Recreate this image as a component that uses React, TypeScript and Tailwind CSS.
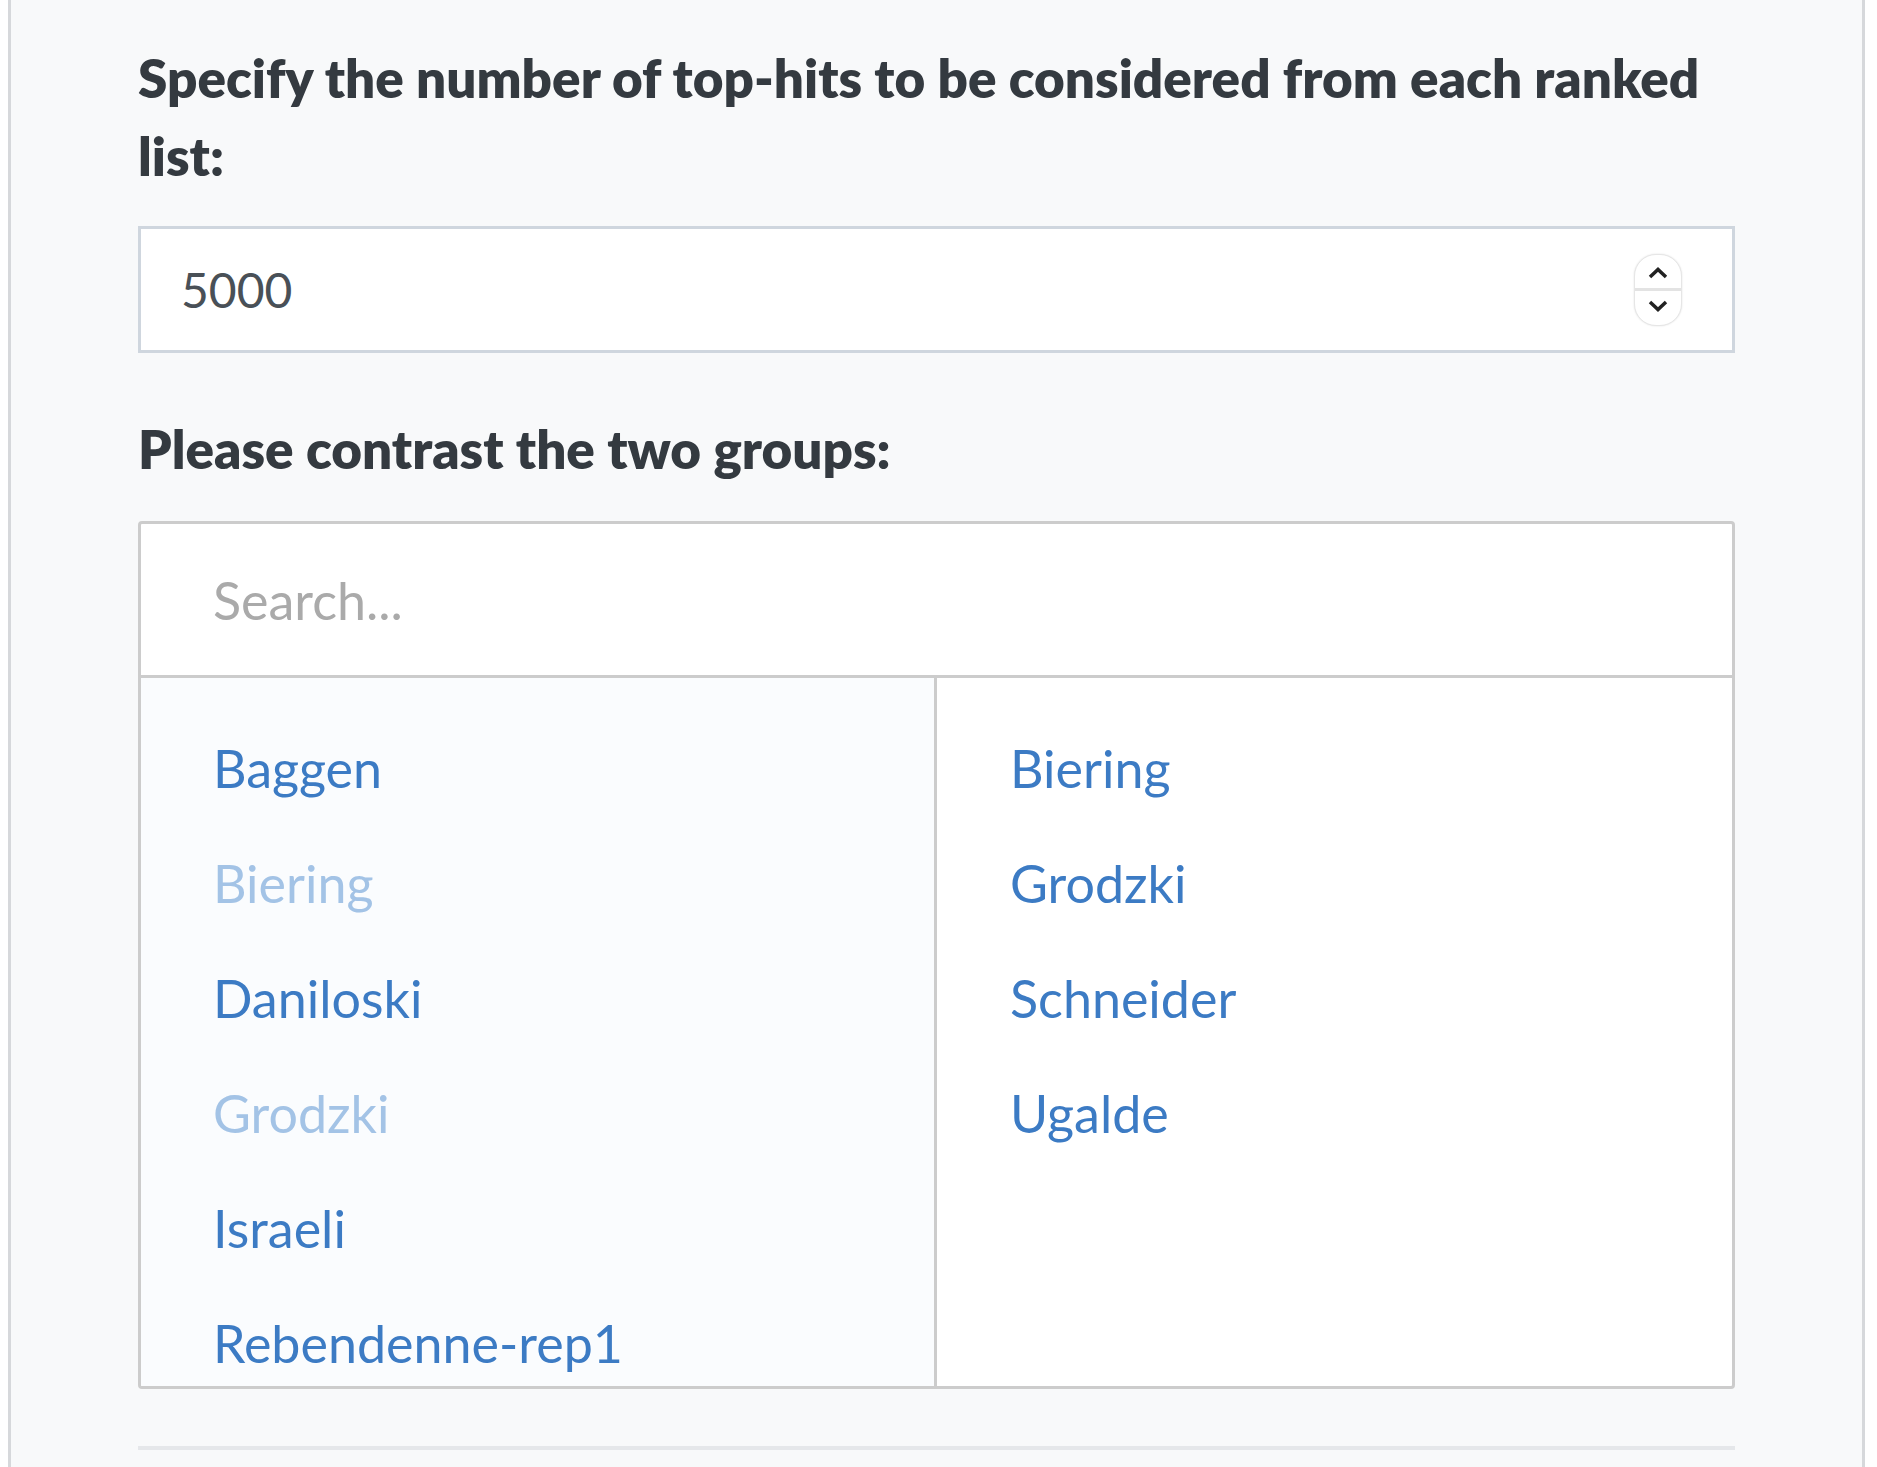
const leftGroup = [
  { name: "Baggen", faded: false },
  { name: "Biering", faded: true },
  { name: "Daniloski", faded: false },
  { name: "Grodzki", faded: true },
  { name: "Israeli", faded: false },
  { name: "Rebendenne-rep1", faded: false },
];

const rightGroup = ["Biering", "Grodzki", "Schneider", "Ugalde"];

function Spinner() {
  return (
    <div className="flex h-[72px] w-[48px] flex-col overflow-hidden rounded-[22px] border border-[#e6e6e6] bg-white shadow-[0_0_2px_rgba(0,0,0,0.12)]">
      <div className="flex flex-1 items-center justify-center border-b-[3px] border-[#e3e3e3] pt-[4px]">
        <svg width="22" height="14" viewBox="0 0 22 14" fill="none">
          <path d="M3 11 L11 3.5 L19 11" stroke="#222" strokeWidth="3.5" />
        </svg>
      </div>
      <div className="flex flex-1 items-center justify-center pb-[4px]">
        <svg width="22" height="14" viewBox="0 0 22 14" fill="none">
          <path d="M3 3 L11 10.5 L19 3" stroke="#222" strokeWidth="3.5" />
        </svg>
      </div>
    </div>
  );
}

export default function App() {
  return (
    <div className="min-h-screen bg-white pl-2 font-['Source_Sans_Pro',Lato,sans-serif]">
      <div className="min-h-[1467px] w-[1857px] border-x-[3px] border-[#d6d8db] bg-[#f8f9fa] px-[127px] pt-[39px]">
        <label className="block text-[53px] font-extrabold leading-[78px] text-[#343a40]">
          Specify the number of top-hits to be considered from each ranked
          <br />
          list:
        </label>

        <div className="mt-[31px] flex h-[127px] items-center justify-between border-[3px] border-[#cfd6de] bg-white pl-[40px] pr-[50px]">
          <span className="text-[48px] text-[#495057]">5000</span>
          <Spinner />
        </div>

        <label className="mt-[57px] block text-[53px] font-extrabold leading-[78px] text-[#343a40]">
          Please contrast the two groups:
        </label>

        <div className="mt-[33px] h-[868px] overflow-hidden rounded-[4px] border-[3px] border-[#cccccc] bg-white">
          <div className="flex h-[154px] items-center border-b-[3px] border-[#cccccc] pl-[72px] text-[52px] text-[#aaaaaa]">
            Search...
          </div>
          <div className="flex h-[708px]">
            <ul className="w-[796px] border-r-[3px] border-[#cccccc] bg-[#fafcfe] pl-[72px] pt-[33px]">
              {leftGroup.map((g) => (
                <li
                  key={g.name}
                  className={
                    "text-[52px] leading-[115px] " +
                    (g.faded ? "text-[#a3c3e6]" : "text-[#3c7bc4]")
                  }
                >
                  {g.name}
                </li>
              ))}
            </ul>
            <ul className="flex-1 pl-[73px] pt-[33px]">
              {rightGroup.map((n) => (
                <li key={n} className="text-[52px] leading-[115px] text-[#3c7bc4]">
                  {n}
                </li>
              ))}
            </ul>
          </div>
        </div>

        <div className="mt-[57px] h-[4px] bg-[#e5e7ea]" />
      </div>
    </div>
  );
}
